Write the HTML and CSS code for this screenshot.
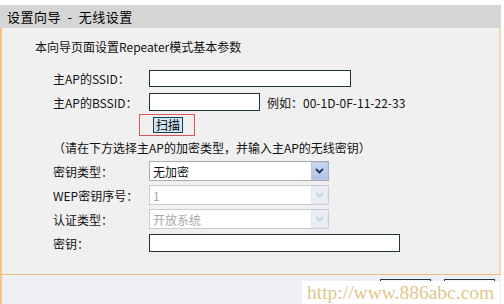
FILE: index.html
```html
<!DOCTYPE html>
<html lang="zh-CN">
<head>
    <meta charset="UTF-8">
    <title>设置向导 - 无线设置</title>
    <link rel="stylesheet" href="styles.css">
</head>
<body>

<div class="wizard">
    <div class="wizard-title">设置向导 - 无线设置</div>

    <div class="wizard-body">
        <p class="intro">本向导页面设置Repeater模式基本参数</p>

        <div class="row">
            <label for="ssid">主AP的SSID：</label>
            <input type="text" id="ssid" class="text ssid">
        </div>

        <div class="row">
            <label for="bssid">主AP的BSSID：</label>
            <div class="field">
                <input type="text" id="bssid" class="text bssid">
                <span class="hint">例如：00-1D-0F-11-22-33</span>
            </div>
        </div>

        <div class="row row-scan">
            <span></span>
            <div class="scan-box"><button class="scan" type="button">扫描</button></div>
        </div>

        <div class="row row-note">（请在下方选择主AP的加密类型，并输入主AP的无线密钥）</div>

        <div class="row row-select">
            <label>密钥类型：</label>
            <div class="select">
                <span class="value">无加密</span>
                <span class="arrow"><svg width="9" height="6" viewBox="0 0 9 6"><path d="M1 1l3.5 3.5L8 1" fill="none" stroke="#27324a" stroke-width="1.8"/></svg></span>
            </div>
        </div>

        <div class="row row-select">
            <label>WEP密钥序号：</label>
            <div class="select disabled">
                <span class="value">1</span>
                <span class="arrow"><svg width="9" height="6" viewBox="0 0 9 6"><path d="M1 1l3.5 3.5L8 1" fill="none" stroke="#c4d2e4" stroke-width="1.8"/></svg></span>
            </div>
        </div>

        <div class="row row-select">
            <label>认证类型：</label>
            <div class="select disabled">
                <span class="value">开放系统</span>
                <span class="arrow"><svg width="9" height="6" viewBox="0 0 9 6"><path d="M1 1l3.5 3.5L8 1" fill="none" stroke="#c4d2e4" stroke-width="1.8"/></svg></span>
            </div>
        </div>

        <div class="row row-select">
            <label for="key">密钥：</label>
            <input type="text" id="key" class="text key">
        </div>
    </div>

    <!-- buttons are covered by the watermark, only their top edges show -->
    <div class="wizard-foot">
        <button class="foot-btn" type="button" aria-label="上一步"></button>
        <button class="foot-btn" type="button" aria-label="下一步"></button>
    </div>
</div>

<div class="watermark">http://www.886abc.com</div>

</body>
</html>
```

FILE: styles.css
```css
body {
    margin: 0;
    background: #fff;
    font-family: "Noto Sans CJK SC", "Liberation Sans", sans-serif;
    font-size: 12px;
    color: #111;
    position: relative;
    height: 304px;
    overflow: hidden;
}
.wizard {
    width: 501px;
    margin-top: 5px;
}
.wizard-title {
    height: 23px;
    line-height: 23px;
    padding-left: 7px;
    background: #d5d5d5;
    font-size: 13px;
    letter-spacing: 0.5px;
    word-spacing: 3px;
    color: #000;
}
.wizard-body {
    height: 246px;
    box-sizing: border-box;
    background: #f0f0f0;
    border-left: 2px solid #f3c58e;
    border-right: 2px solid #eadcae;
    padding-top: 9px;
}
.intro {
    margin: 0 0 9px 33px;
    line-height: 20px;
    font-size: 12px;
}
.row {
    display: grid;
    grid-template-columns: 96px 1fr;
    align-items: center;
    height: 24px;
    padding-left: 51px;
}
.row label {
    white-space: nowrap;
}
.field {
    display: flex;
    align-items: center;
    gap: 7px;
}
.text {
    box-sizing: border-box;
    height: 18px;
    border: 1px solid #1f3333;
    background: #fff;
    padding: 0 2px;
    margin: 0;
}
.ssid {
    width: 202px;
    height: 17px;
}
.bssid {
    width: 111px;
}
.key {
    width: 251px;
}
.hint {
    white-space: nowrap;
}
.row-scan {
    height: 22px;
}
.scan-box {
    box-sizing: border-box;
    width: 56px;
    height: 22px;
    margin-left: -10px;
    border: 1px solid #d8585a;
    display: flex;
    align-items: center;
    padding-left: 13px;
}
.scan {
    box-sizing: border-box;
    width: 30px;
    height: 16px;
    padding: 0;
    border: 1px solid #28384a;
    background: #cfe6f5;
    font-family: inherit;
    font-size: 12px;
    line-height: 14px;
    color: #000;
}
.row-note {
    display: block;
    height: 23px;
    line-height: 23px;
    white-space: nowrap;
}
.row-select {
    height: 24px;
}
.select {
    box-sizing: border-box;
    width: 180px;
    height: 20px;
    border: 1px solid #a9adb3;
    background: #fff;
    display: flex;
    align-items: center;
    justify-content: space-between;
    padding-left: 3px;
}
.select .value {
    font-size: 12px;
}
.arrow {
    box-sizing: border-box;
    width: 17px;
    height: 18px;
    background: linear-gradient(#c7d7f2, #aec3e8);
    border: 1px solid #b9c8e2;
    display: flex;
    align-items: center;
    justify-content: center;
}
.select.disabled {
    border-color: #cdcdcd;
}
.select.disabled .value {
    color: #a8a8a8;
}
.select.disabled .arrow {
    background: #e9eef6;
    border-color: #e2e8f1;
}
.wizard-foot {
    height: 25px;
    background: #eef0f5;
    border-left: 2px solid #f3c58e;
    border-top: 1px solid #efb97c;
    border-bottom: 1px solid #efb97c;
    display: flex;
    justify-content: flex-end;
    gap: 13px;
    padding-right: 6px;
    padding-top: 4px;
    box-sizing: content-box;
}
.foot-btn {
    width: 51px;
    height: 22px;
    border: 1px solid #23344a;
    background: #f6f6f6;
}
.watermark {
    position: absolute;
    left: 302px;
    top: 281px;
    width: 198px;
    height: 23px;
    background: #fff;
    font-family: "Liberation Serif", serif;
    font-size: 19.5px;
    line-height: 23px;
    color: #e2c78c;
    padding-left: 5px;
    box-sizing: border-box;
}
```
